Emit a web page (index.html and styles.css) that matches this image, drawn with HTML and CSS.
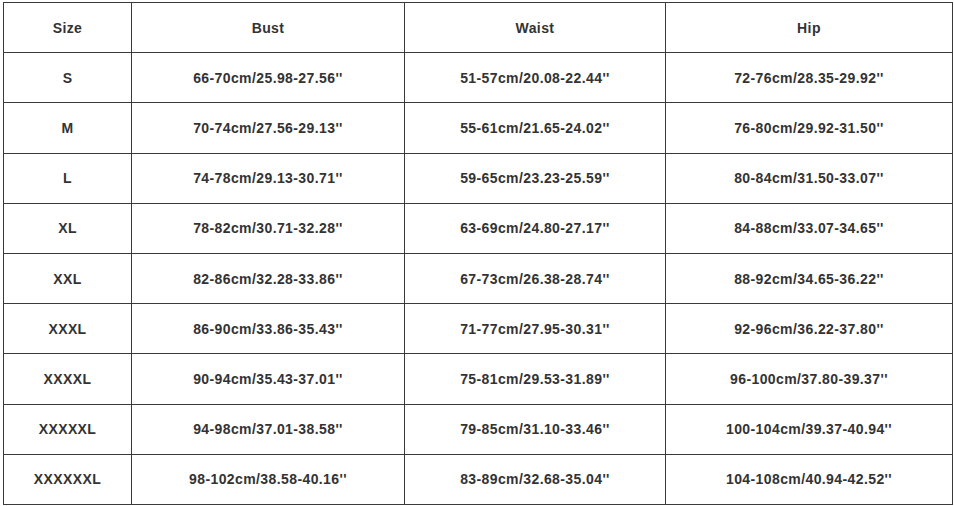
FILE: index.html
```html
<!DOCTYPE html>
<html>
<head>
<meta charset="utf-8">
<link rel="stylesheet" href="styles.css">
</head>
<body>
<div class="wrap">
<table class="size-table">
<colgroup>
<col class="c-size"><col class="c-bust"><col class="c-waist"><col class="c-hip">
</colgroup>
<tr><td>Size</td><td>Bust</td><td>Waist</td><td>Hip</td></tr>
<tr><td>S</td><td>66-70cm/25.98-27.56''</td><td>51-57cm/20.08-22.44''</td><td>72-76cm/28.35-29.92''</td></tr>
<tr><td>M</td><td>70-74cm/27.56-29.13''</td><td>55-61cm/21.65-24.02''</td><td>76-80cm/29.92-31.50''</td></tr>
<tr><td>L</td><td>74-78cm/29.13-30.71''</td><td>59-65cm/23.23-25.59''</td><td>80-84cm/31.50-33.07''</td></tr>
<tr><td>XL</td><td>78-82cm/30.71-32.28''</td><td>63-69cm/24.80-27.17''</td><td>84-88cm/33.07-34.65''</td></tr>
<tr><td>XXL</td><td>82-86cm/32.28-33.86''</td><td>67-73cm/26.38-28.74''</td><td>88-92cm/34.65-36.22''</td></tr>
<tr><td>XXXL</td><td>86-90cm/33.86-35.43''</td><td>71-77cm/27.95-30.31''</td><td>92-96cm/36.22-37.80''</td></tr>
<tr><td>XXXXL</td><td>90-94cm/35.43-37.01''</td><td>75-81cm/29.53-31.89''</td><td>96-100cm/37.80-39.37''</td></tr>
<tr><td>XXXXXL</td><td>94-98cm/37.01-38.58''</td><td>79-85cm/31.10-33.46''</td><td>100-104cm/39.37-40.94''</td></tr>
<tr><td>XXXXXXL</td><td>98-102cm/38.58-40.16''</td><td>83-89cm/32.68-35.04''</td><td>104-108cm/40.94-42.52''</td></tr>
</table>
</div>
</body>
</html>
```
FILE: styles.css
```css
html, body {
  margin: 0;
  padding: 0;
  background: #ffffff;
}
.wrap {
  padding: 2px 0 0 3px;
}
.size-table {
  border-collapse: collapse;
  width: 949px;
  table-layout: fixed;
  font-family: "Liberation Sans", Arial, sans-serif;
  font-weight: bold;
  font-size: 14px;
  letter-spacing: 0.4px;
  color: #333333;
}
.c-size { width: 128px; }
.c-bust { width: 273px; }
.c-waist { width: 261px; }
.c-hip { width: 287px; }
.size-table td {
  border: 1.5px solid #3a3a3a;
  height: 49.2px;
  padding: 0;
  text-align: center;
  vertical-align: middle;
}
```
